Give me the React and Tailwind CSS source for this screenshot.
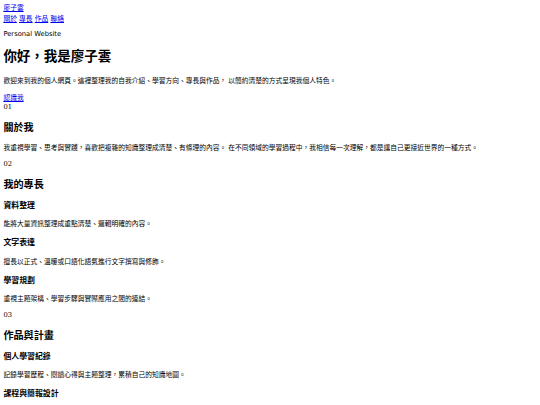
import React from "react";

const navLinks = ["關於", "專長", "作品", "聯絡"];

const skills = [
  { title: "資料整理", text: "能將大量資訊整理成重點清楚、邏輯明確的內容。" },
  { title: "文字表達", text: "擅長以正式、溫暖或口語化語氣進行文字撰寫與修飾。" },
  { title: "學習規劃", text: "重視主題架構、學習步驟與實際應用之間的連結。" },
];

const projects = [
  { title: "個人學習紀錄", text: "記錄學習歷程、閱讀心得與主題整理，累積自己的知識地圖。" },
  { title: "課程與簡報設計", text: "" },
];

// page is the plain 1280px document shrunk to 540px, so every size is x0.421875
const Num = ({ children }) => (
  <div className="leading-[8.6px] font-['DejaVu_Serif',serif]">{children}</div>
);

const H2 = ({ children }) => (
  <h2 className="text-[10.125px] leading-[14.77px] font-bold my-[8.4px]">{children}</h2>
);

const H3 = ({ children }) => (
  <h3 className="text-[7.9px] leading-[11.39px] font-bold my-[7.9px]">{children}</h3>
);

const P = ({ children }) => <p className="my-[6.75px]">{children}</p>;

const App = () => {
  return (
    <div className="min-h-screen bg-white text-black p-[3.375px] text-[6.75px] leading-[10.125px] font-['DejaVu_Serif','Noto_Sans_CJK_TC',serif]">
      <header>
        <a href="#" className="text-[#0000ee] underline">
          廖子雲
        </a>
        <nav>
          {navLinks.map((n, i) => (
            <React.Fragment key={n}>
              <a href="#" className="text-[#0000ee] underline">
                {n}
              </a>
              {i < navLinks.length - 1 && " "}
            </React.Fragment>
          ))}
        </nav>
      </header>

      <section>
        <p className="my-[6.75px] leading-[8.02px] font-['DejaVu_Sans',sans-serif]">Personal Website</p>
        <h1 className="text-[13.5px] leading-[19.4px] font-bold my-[9.05px]">你好，我是廖子雲</h1>
        <P>
          歡迎來到我的個人網頁。這裡整理我的自我介紹、學習方向、專長與作品，
          以簡約清楚的方式呈現我個人特色。
        </P>
        <a href="#" className="text-[#0000ee] underline">
          認識我
        </a>
      </section>

      <section>
        <Num>01</Num>
        <H2>關於我</H2>
        <P>
          我重視學習、思考與實踐，喜歡把複雜的知識整理成清楚、有條理的內容。
          在不同領域的學習過程中，我相信每一次理解，都是讓自己更接近世界的一種方式。
        </P>
      </section>

      <section>
        <Num>02</Num>
        <H2>我的專長</H2>
        {skills.map((s) => (
          <div key={s.title}>
            <H3>{s.title}</H3>
            <P>{s.text}</P>
          </div>
        ))}
      </section>

      <section>
        <Num>03</Num>
        <H2>作品與計畫</H2>
        {projects.map((s) => (
          <div key={s.title}>
            <H3>{s.title}</H3>
            {s.text && <P>{s.text}</P>}
          </div>
        ))}
      </section>
    </div>
  );
};

export default App;
